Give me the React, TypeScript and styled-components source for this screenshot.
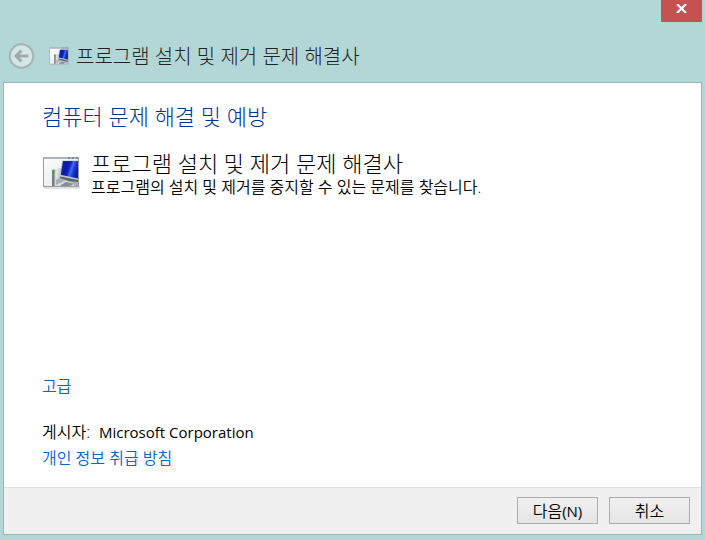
import React from "react";
import styled, { createGlobalStyle } from "styled-components";

const GlobalStyle = createGlobalStyle`
  *, *::before, *::after { box-sizing: border-box; }
  html, body, #root { height: 100%; }
  body {
    margin: 0;
    background: #b2d7d6;
    font-family: "Open Sans", "Noto Sans CJK KR", sans-serif;
    font-size: 16px;
    line-height: 24px;
    color: #000;
  }
`;

const Window = styled.div`
  display: flex;
  flex-direction: column;
  min-height: 100%;
  padding: 0 3px 5px;
  background: #b2d7d6;
`;

const CaptionBar = styled.div`
  display: flex;
  justify-content: flex-end;
  height: 22px;
`;

const CloseButton = styled.button`
  display: flex;
  align-items: center;
  justify-content: center;
  width: 41px;
  height: 22px;
  padding: 0 0 5px;
  border: 0;
  background: #c75050;
`;

const Header = styled.header`
  display: flex;
  align-items: center;
  height: 60px;
  padding: 8px 5px 0;
`;

const BackButton = styled.button`
  display: flex;
  width: 27px;
  height: 26px;
  margin-right: 14px;
  padding: 0;
  border: 0;
  background: none;
`;

const WindowTitle = styled.h1`
  margin: 0 0 0 7px;
  padding-top: 2px;
  font-size: 20px;
  line-height: 28px;
  font-weight: 300;
  color: #222;
`;

const Panel = styled.div`
  display: flex;
  flex: 1;
  flex-direction: column;
  border: 1px solid #95b7b7;
  background: #fff;
`;

const Content = styled.main`
  display: flex;
  flex: 1;
  flex-direction: column;
  padding: 17px 38px;
`;

const Heading = styled.h2`
  margin: 0 0 19px;
  font-size: 22px;
  line-height: 32px;
  font-weight: 300;
  color: #003399;
`;

const Troubleshooter = styled.section`
  display: flex;
  gap: 11px;
`;

const IconSlot = styled.div`
  padding-top: 5px;
`;

const ToolName = styled.h3`
  margin: 0;
  font-size: 22px;
  line-height: 24px;
  font-weight: 300;
`;

const Description = styled.p`
  margin: 0;
  font-weight: 350;
`;

const Details = styled.div`
  display: flex;
  flex-direction: column;
  align-items: flex-start;
  margin-top: auto;
`;

const Link = styled.a<{ $spaced?: boolean }>`
  margin-bottom: ${(p) => (p.$spaced ? 22 : 0)}px;
  font-weight: 350;
  color: #0066cc;
  text-decoration: none;
`;

const Publisher = styled.p`
  display: flex;
  gap: 9px;
  margin: 0 0 2px;
  font-weight: 350;
`;

const LatinText = styled.span`
  font-size: 15px;
  font-weight: 400;
`;

const Footer = styled.footer`
  display: flex;
  justify-content: flex-end;
  gap: 11px;
  padding: 9px 11px 10px;
  border-top: 1px solid #dfdfdf;
  background: #f0f0f0;
`;

const CommandButton = styled.button`
  width: 81px;
  height: 27px;
  padding: 0;
  border: 1px solid #acacac;
  background: linear-gradient(#f0f0f0, #e5e5e5);
  font-family: inherit;
  font-size: 16px;
  line-height: 24px;
  font-weight: 350;
  color: #000;
`;

function BackIcon() {
  return (
    <svg width="27" height="26" viewBox="0 0 27 26" aria-hidden="true">
      <circle cx="13.5" cy="13" r="11.7" fill="#d3e7e6" stroke="#a5b3b3" strokeWidth="2" />
      <path d="M20.5 13H9M13.5 7.5L8 13l5.5 5.5" fill="none" stroke="#9dacab" strokeWidth="3" />
    </svg>
  );
}

function ComputerIcon({ width, height, id }: { width: number; height: number; id: string }) {
  return (
    <svg width={width} height={height} viewBox="0 0 38 34" preserveAspectRatio="none" aria-hidden="true">
      <defs>
        <linearGradient id={`${id}-screen`} x1="0" y1="0" x2="1" y2="0.35">
          <stop offset="0" stopColor="#10339c" />
          <stop offset="0.35" stopColor="#0a1aa0" />
          <stop offset="0.55" stopColor="#1220c8" />
          <stop offset="0.7" stopColor="#4a6cec" />
          <stop offset="0.8" stopColor="#2646d8" />
          <stop offset="1" stopColor="#0b22a4" />
        </linearGradient>
        <linearGradient id={`${id}-page`} x1="0" y1="0" x2="1" y2="1">
          <stop offset="0" stopColor="#fff" />
          <stop offset="1" stopColor="#dfe2e5" />
        </linearGradient>
        <linearGradient id={`${id}-tower`} x1="0" y1="0" x2="1" y2="0">
          <stop offset="0" stopColor="#b4b8ba" />
          <stop offset="0.4" stopColor="#e2e4e5" />
          <stop offset="1" stopColor="#a9afb3" />
        </linearGradient>
      </defs>
      <rect x="2" y="30" width="36" height="3" fill="#c9cdd0" opacity="0.6" />
      <rect x="1.5" y="1.5" width="35" height="29" fill={`url(#${id}-page)`} stroke="#929da8" />
      <rect x="1" y="1" width="36" height="2" fill="#a9b4be" />
      <path d="M26 2h2M30 2h2M34 2h2" stroke="#505d70" strokeWidth="1.2" />
      <path d="M10 14l8-2 4 1v17H10z" fill={`url(#${id}-tower)`} />
      <path d="M10 14l2.5-.6V30H10z" fill="#777d80" />
      <path d="M11.3 14v3.5" stroke="#26b51e" strokeWidth="1.8" />
      <path d="M14 24l6-4 16 4v6H14z" fill="#a8afb4" />
      <path d="M14 29l9-4.5 9 3v2.5H14z" fill="#d6dadc" />
      <path d="M20 4.5h16v19.5l-18.5-3.5z" fill="#b9c4ce" />
      <path d="M21 5H36v17.5L18.8 18.8z" fill={`url(#${id}-screen)`} />
      <path d="M18 20.5l18 3.5v2l-9-1-9-3z" fill="#5a646e" />
      <path d="M19 29l5-3 8 1.7-4 2.3h-9z" fill="#868e94" />
    </svg>
  );
}

function CloseIcon() {
  return (
    <svg width="11" height="9" viewBox="0 0 11 9" aria-hidden="true">
      <path d="M1 0L10 9M10 0L1 9" stroke="#fff" strokeWidth="2.2" />
    </svg>
  );
}

export default function App() {
  return (
    <>
      <GlobalStyle />
      <Window>
        <CaptionBar>
          <CloseButton type="button" aria-label="닫기">
            <CloseIcon />
          </CloseButton>
        </CaptionBar>
        <Header>
          <BackButton type="button" aria-label="뒤로">
            <BackIcon />
          </BackButton>
          <ComputerIcon id="title" width={20} height={19} />
          <WindowTitle>프로그램 설치 및 제거 문제 해결사</WindowTitle>
        </Header>
        <Panel>
          <Content>
            <Heading>컴퓨터 문제 해결 및 예방</Heading>
            <Troubleshooter>
              <IconSlot>
                <ComputerIcon id="tool" width={38} height={34} />
              </IconSlot>
              <div>
                <ToolName>프로그램 설치 및 제거 문제 해결사</ToolName>
                <Description>프로그램의 설치 및 제거를 중지할 수 있는 문제를 찾습니다.</Description>
              </div>
            </Troubleshooter>
            <Details>
              <Link href="#advanced" $spaced>고급</Link>
              <Publisher>
                <span>게시자:</span>
                <LatinText>Microsoft Corporation</LatinText>
              </Publisher>
              <Link href="#privacy">개인 정보 취급 방침</Link>
            </Details>
          </Content>
          <Footer>
            <CommandButton type="button">다음<LatinText>(N)</LatinText></CommandButton>
            <CommandButton type="button">취소</CommandButton>
          </Footer>
        </Panel>
      </Window>
    </>
  );
}
